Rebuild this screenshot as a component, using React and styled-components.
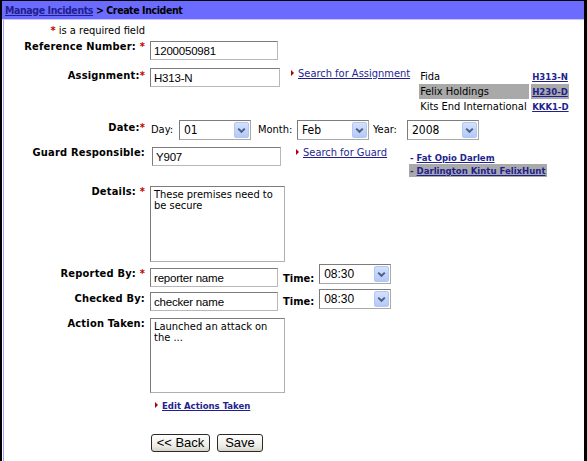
import React from "react";
import styled, { createGlobalStyle } from "styled-components";

const GlobalStyle = createGlobalStyle`
  body {
    margin: 0;
    background: #fff;
    font-family: "DejaVu Sans", Verdana, sans-serif;
    font-stretch: condensed;
    font-size: 11px;
    color: #000;
  }
`;

const Frame = styled.div`
  box-sizing: border-box;
  height: 461px;
  border-top: 1px solid #000;
  border-left: 2px solid #000;
  border-right: 3px solid #000;
  overflow: hidden;
`;

const Header = styled.div`
  height: 18px;
  background: #6b6bff;
  border-bottom: 1px solid #c6c6ff;
  padding-left: 3px;
  display: flex;
  align-items: center;
  font-weight: bold;
  font-size: 10.5px;
  letter-spacing: -0.4px;
`;

const Body = styled.div`
  margin-left: 1px;
  border-left: 1px solid #a4a4ff;
  height: 100%;
  padding-top: 4px;
`;

const Link = styled.a`
  color: #1f1f8f;
  text-decoration: underline;
  cursor: pointer;
`;

const SmallLink = styled(Link)`
  font-weight: bold;
  font-size: 9.5px;
`;

const Row = styled.div`
  display: flex;
  align-items: flex-start;
  margin-top: ${(p) => p.$mt || 0}px;
`;

const Label = styled.div`
  box-sizing: border-box;
  width: 143px;
  flex: none;
  padding-right: 2px;
  padding-top: ${(p) => p.$pt || 0}px;
  text-align: right;
  font-weight: bold;
  line-height: 12px;
  letter-spacing: 0.2px;
  white-space: nowrap;
`;

const Star = styled.span`
  color: #c00000;
  font-weight: bold;
`;

const Field = styled.div`
  margin-left: ${(p) => p.$ml ?? 3}px;
  display: flex;
  align-items: ${(p) => p.$align || "flex-start"};
`;

const TextInput = styled.div`
  box-sizing: border-box;
  width: ${(p) => p.$w || 129}px;
  height: 19px;
  margin-top: ${(p) => p.$mt || 0}px;
  margin-left: ${(p) => p.$ml || 0}px;
  border: 1px solid #7c7c7c;
  border-right-color: #b8b8b8;
  border-bottom-color: #b8b8b8;
  padding: 2px 3px 0;
  font-family: "Liberation Sans", Arial, sans-serif;
  font-stretch: normal;
  font-size: 11.5px;
  letter-spacing: -0.2px;
  line-height: 14px;
  flex: none;
`;

const TextArea = styled.div`
  box-sizing: border-box;
  width: 135px;
  height: ${(p) => p.$h}px;
  border: 1px solid #7c7c7c;
  border-right-color: #b0b0b0;
  border-bottom-color: #b0b0b0;
  padding: 2px 3px;
  line-height: 11px;
  font-size: 11px;
`;

const SelectBox = styled.div`
  box-sizing: border-box;
  width: 72px;
  height: 20px;
  flex: none;
  border: 1px solid #7c7c7c;
  border-right-color: #a9a9a9;
  border-bottom-color: #a9a9a9;
  display: flex;
  align-items: center;
  justify-content: space-between;
  padding: 1px 1px 1px 4px;
  font-family: ${(p) =>
    p.$arial ? '"Liberation Sans", Arial, sans-serif' : '"DejaVu Sans", Verdana, sans-serif'};
  font-stretch: ${(p) => (p.$arial ? "normal" : "condensed")};
  font-size: 12px;
`;

const DropButton = styled.div`
  box-sizing: border-box;
  width: 15px;
  height: 16px;
  border: 1px solid #b3c6f2;
  border-radius: 2px;
  background: linear-gradient(#d4e0fd, #b4c9f8);
  display: flex;
  align-items: center;
  justify-content: center;
`;

const InlineLabel = styled.span`
  box-sizing: border-box;
  width: ${(p) => (p.$w ? `${p.$w}px` : "auto")};
  flex: none;
  margin-left: ${(p) => p.$ml || 0}px;
  margin-right: ${(p) => p.$mr || 0}px;
  margin-top: ${(p) => p.$mt || 0}px;
  font-weight: ${(p) => (p.$bold ? "bold" : "normal")};
  line-height: 12px;
  white-space: nowrap;
`;

const Arrow = styled.span`
  display: inline-block;
  width: 0;
  height: 0;
  border-left: 3px solid #b00000;
  border-top: 3px solid transparent;
  border-bottom: 3px solid transparent;
  margin-right: 4px;
  vertical-align: 1px;
`;

const ActionLink = styled.div`
  margin-left: ${(p) => p.$ml || 0}px;
  line-height: 12px;
  white-space: nowrap;
`;

const MatchTable = styled.div`
  margin-left: ${(p) => p.$ml}px;
  margin-top: 1px;
  display: grid;
  grid-template-columns: 110px auto;
  column-gap: 2px;
`;

const Cell = styled.div`
  height: 15px;
  line-height: 15px;
  padding-left: 1px;
  background: ${(p) => (p.$on ? "#a9a9a9" : "transparent")};
  white-space: nowrap;
`;

const GuardList = styled.div`
  margin-left: 22px;
  margin-top: 4px;
  display: flex;
  flex-direction: column;
  align-items: flex-start;
`;

const GuardItem = styled.div`
  height: 13px;
  line-height: 13px;
  padding: 0 1px;
  background: ${(p) => (p.$on ? "#a9a9a9" : "transparent")};
  font-weight: bold;
  font-size: 9.5px;
  color: #1f1f8f;
  white-space: nowrap;
`;

const Note = styled.div`
  box-sizing: border-box;
  width: 143px;
  padding-right: 2px;
  text-align: right;
  line-height: 14px;
`;

const Buttons = styled.div`
  display: flex;
  gap: 7px;
  margin-left: 1px;
`;

const Button = styled.button`
  box-sizing: border-box;
  width: ${(p) => p.$w}px;
  height: 18px;
  padding: 0;
  border: 1px solid #2a2a2a;
  border-radius: 3px;
  background: linear-gradient(#ffffff, #ecebe6 70%, #d6d2c6);
  font-family: "Liberation Sans", Arial, sans-serif;
  font-size: 13px;
  line-height: 16px;
  color: #000;
`;

function Chevron() {
  return (
    <DropButton>
      <svg width="9" height="7" viewBox="0 0 9 7">
        <path d="M1.2 1.6 L4.5 4.8 L7.8 1.6" fill="none" stroke="#4d6185" strokeWidth="2" />
      </svg>
    </DropButton>
  );
}

function Select({ value, arial }) {
  return (
    <SelectBox $arial={arial}>
      <span>{value}</span>
      <Chevron />
    </SelectBox>
  );
}

const assignments = [
  { name: "Fida", code: "H313-N" },
  { name: "Felix Holdings", code: "H230-D", on: true },
  { name: "Kits End International", code: "KKK1-D" },
];

export default function App() {
  return (
    <>
      <GlobalStyle />
      <Frame>
        <Header>
          <Link>Manage Incidents</Link>&nbsp;&gt; Create Incident
        </Header>
        <Body>
          <Note>
            <Star>*</Star> is a required field
          </Note>

          <Row $mt={3}>
            <Label>
              Reference Number: <Star>*</Star>
            </Label>
            <Field>
              <TextInput $w={128}>1200050981</TextInput>
            </Field>
          </Row>

          <Row $mt={8}>
            <Label $pt={2}>
              Assignment:<Star>*</Star>
            </Label>
            <Field>
              <TextInput $w={130}>H313-N</TextInput>
              <ActionLink $ml={11}>
                <Arrow />
                <Link>Search for Assignment</Link>
              </ActionLink>
              <MatchTable $ml={9}>
                {assignments.map((a) => (
                  <React.Fragment key={a.code}>
                    <Cell $on={a.on}>{a.name}</Cell>
                    <Cell $on={a.on}>
                      <SmallLink>{a.code}</SmallLink>
                    </Cell>
                  </React.Fragment>
                ))}
              </MatchTable>
            </Field>
          </Row>

          <Row $mt={6}>
            <Label $pt={2}>
              Date:<Star>*</Star>
            </Label>
            <Field $align="center">
              <InlineLabel $ml={1} $w={28}>Day:</InlineLabel>
              <Select value="01" />
              <InlineLabel $ml={7} $w={39}>Month:</InlineLabel>
              <Select value="Feb" />
              <InlineLabel $ml={4} $w={34}>Year:</InlineLabel>
              <Select value="2008" />
            </Field>
          </Row>

          <Row $mt={7}>
            <Label>Guard Responsible:</Label>
            <Field>
              <TextInput $w={129} $ml={2}>Y907</TextInput>
              <ActionLink $ml={15}>
                <Arrow />
                <Link>Search for Guard</Link>
              </ActionLink>
              <GuardList>
                <GuardItem>
                  - <u>Fat Opio Darlem</u>
                </GuardItem>
                <GuardItem $on>
                  - <u>Darlington Kintu FelixHunt</u>
                </GuardItem>
              </GuardList>
            </Field>
          </Row>

          <Row $mt={9}>
            <Label>
              Details: <Star>*</Star>
            </Label>
            <Field>
              <TextArea $h={76}>These premises need to be secure</TextArea>
            </Field>
          </Row>

          <Row $mt={2}>
            <Label $pt={4}>
              Reported By: <Star>*</Star>
            </Label>
            <Field>
              <TextInput $w={128} $mt={4}>reporter name</TextInput>
              <InlineLabel $bold $ml={5} $mr={5} $mt={9}>
                Time:
              </InlineLabel>
              <Select value="08:30" arial />
            </Field>
          </Row>

          <Row $mt={2}>
            <Label $pt={4}>Checked By:</Label>
            <Field>
              <TextInput $w={128} $mt={3}>checker name</TextInput>
              <InlineLabel $bold $ml={5} $mr={5} $mt={7}>
                Time:
              </InlineLabel>
              <Select value="08:30" arial />
            </Field>
          </Row>

          <Row $mt={7}>
            <Label>Action Taken:</Label>
            <Field>
              <TextArea $h={75}>Launched an attack on the ...</TextArea>
            </Field>
          </Row>

          <Row $mt={7}>
            <Label />
            <Field $ml={8}>
              <ActionLink>
                <Arrow />
                <SmallLink>Edit Actions Taken</SmallLink>
              </ActionLink>
            </Field>
          </Row>

          <Row $mt={22}>
            <Label />
            <Field>
              <Buttons>
                <Button $w={59}>&lt;&lt; Back</Button>
                <Button $w={46}>Save</Button>
              </Buttons>
            </Field>
          </Row>
        </Body>
      </Frame>
    </>
  );
}
